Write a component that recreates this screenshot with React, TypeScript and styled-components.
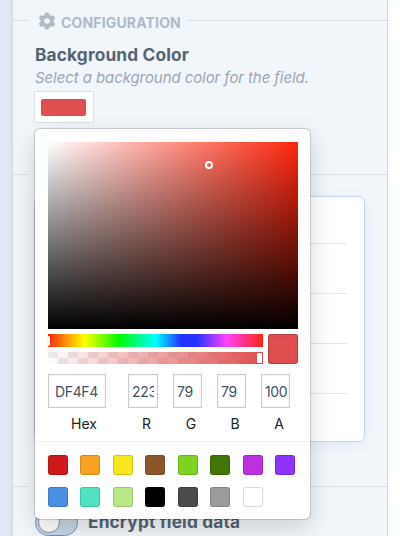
import React from 'react';
import styled, { createGlobalStyle } from 'styled-components';

const GlobalStyle = createGlobalStyle`
  * { box-sizing: border-box; }
  body { margin: 0; background: #fff; font-family: Inter, sans-serif; overflow: hidden; }
`;

const Page = styled.div`
  display: flex;
  width: 400px;
  height: 536px;
  overflow: hidden;
  background: #fff;
`;

const Gutter = styled.div`
  flex: 0 0 12px;
  background: linear-gradient(90deg, #e2eaf6 0, #e1eaf5 60%, #d9e3ee 100%);
`;

const Panel = styled.main`
  position: relative;
  flex: 0 0 376px;
  display: flex;
  flex-direction: column;
  background: #f1f6fb;
  border: solid #d3dce7;
  border-width: 0 1px;

  > * { flex-shrink: 0; }
`;

const SectionHeader = styled.header`
  display: flex;
  align-items: center;
  height: 41px;
  color: #b0b9c6;
`;

const Rule = styled.div<{ $width?: number }>`
  height: 1px;
  flex: ${p => (p.$width ? `0 0 ${p.$width}px` : '1')};
  background: #d9e1e8;
`;

const HeaderLabel = styled.h2`
  display: flex;
  align-items: center;
  gap: 5px;
  width: 158px;
  height: 24px;
  margin: 3px 0 0;
  padding-left: 9px;
  font-size: 14px;
  font-weight: 700;
  letter-spacing: 0.16px;
  white-space: nowrap;
`;

const GearIcon = styled.svg`
  flex: none;
  margin-top: -2px;
`;

const Field = styled.section`
  display: flex;
  flex-direction: column;
  align-items: flex-start;
  height: 133px;
  padding: 3px 0 0 22px;
`;

const FieldTitle = styled.h3`
  margin: 0;
  font-size: 17.3px;
  line-height: 22px;
  font-weight: 700;
  letter-spacing: 0.15px;
  color: #566472;
  white-space: nowrap;
`;

const Hint = styled.p`
  margin: 2px 0 0;
  font-size: 15px;
  line-height: 20px;
  font-style: italic;
  font-feature-settings: 'cv11';
  letter-spacing: -0.08px;
  color: #9aa5b3;
  white-space: nowrap;
`;

const ColorButton = styled.button`
  width: 60px;
  height: 32px;
  margin: 3px 0 0 -1px;
  padding: 7px 7px 6px 6px;
  border: 1px solid #dbe0e5;
  border-radius: 2px;
  background: #fff;
`;

const ColorChip = styled.span`
  display: block;
  width: 45px;
  height: 17px;
  border-radius: 2px;
  background: #df4f4f;
`;

const OptionsCard = styled.div`
  width: 331px;
  height: 246px;
  margin: 21px 0 44px 21px;
  padding: 0 17px;
  border: 1px solid #c8d5e6;
  border-radius: 7px;
  background: #fff;
  box-shadow: 0 3px 12px rgba(90, 130, 200, 0.1);
`;

const OptionRow = styled.div<{ $tall?: boolean }>`
  height: ${p => (p.$tall ? 47 : 50)}px;
  border-bottom: 1px solid #e4e6e9;
`;

const SplitRule = styled.div`
  display: flex;
  justify-content: space-between;
`;

const ToggleRow = styled.div`
  display: flex;
  align-items: center;
  gap: 10px;
  height: 70px;
  padding-left: 22px;
`;

const Toggle = styled.span`
  display: flex;
  align-items: center;
  width: 43px;
  height: 27px;
  padding: 2px;
  border: 1px solid #7690b0;
  border-radius: 14px;
  background: #c9d5e3;
`;

const Knob = styled.span`
  width: 22px;
  height: 22px;
  border: 1px solid #7d94b0;
  border-radius: 50%;
  background: #fff;
`;

const Picker = styled.div`
  position: absolute;
  left: 22px;
  top: 129px;
  width: 275px;
  height: 390px;
  padding-top: 13px;
  border-radius: 5px;
  background: #fff;
  box-shadow: 0 0 0 1px rgba(0, 0, 0, 0.15), 0 8px 24px rgba(0, 0, 0, 0.16);
`;

const Saturation = styled.div`
  display: flex;
  width: 250px;
  height: 187px;
  margin: 0 0 5px 13px;
  padding: 19px 0 0 157px;
  background: linear-gradient(to top, #000, transparent),
    linear-gradient(to right, #fff, rgba(255, 255, 255, 0)), #ff260d;
`;

const Pointer = styled.span`
  width: 8px;
  height: 8px;
  border: 2px solid #fff;
  border-radius: 50%;
`;

const Controls = styled.div`
  display: flex;
  gap: 5px;
  margin-left: 13px;
`;

const Sliders = styled.div`
  display: flex;
  flex-direction: column;
  gap: 5px;
  width: 215px;
`;

const Hue = styled.div`
  display: flex;
  align-items: center;
  height: 13px;
  background: linear-gradient(90deg, #ff260d 0, #ffff00 17%, #00f900 33%, #00fdff 50%, #2432ff 62%, #2432ff 69%, #ff40ff 83%, #ff260d 100%);
`;

const Alpha = styled.div`
  display: flex;
  align-items: center;
  justify-content: flex-end;
  height: 12px;
  background: linear-gradient(90deg, rgba(223, 79, 79, 0), #df4f4f),
    conic-gradient(#fff 0 25%, #ebebeb 0 50%, #fff 0 75%, #ebebeb 0) 0 -4px / 20px 20px;
`;

const Handle = styled.span<{ $half?: boolean }>`
  width: ${p => (p.$half ? 2 : 5)}px;
  height: 10px;
  margin-right: ${p => (p.$half ? 0 : 1)}px;
  border-radius: 1px;
  background: #fff;
  box-shadow: 0 0 1px rgba(0, 0, 0, 0.4);
`;

const Current = styled.div`
  width: 30px;
  height: 30px;
  border-radius: 3px;
  background: #df4f4f;
  box-shadow: inset 0 0 0 1px rgba(0, 0, 0, 0.15), inset 0 0 4px rgba(0, 0, 0, 0.1);
`;

const Fields = styled.div`
  display: grid;
  grid-template-columns: 58px 30px 29px 29px 29px;
  column-gap: 15px;
  margin: 10px 0 0 13px;
`;

const Channel = styled.label<{ $shift: number }>`
  display: flex;
  flex-direction: column;
  align-items: center;
  margin-left: ${p => p.$shift}px;
  margin-right: ${p => -p.$shift}px;
  font-size: 14px;
  color: #222;
`;

const ChannelInput = styled.input<{ $wide?: boolean; $flush?: boolean }>`
  width: 100%;
  height: 34px;
  padding: 0 ${p => (p.$flush ? 0 : 3)}px 0 ${p => (p.$wide ? 6 : 3)}px;
  border: 1px solid #ccc;
  border-radius: 0;
  outline: 0;
  font: 14px Inter, sans-serif;
  letter-spacing: -0.35px;
  color: #46535f;
  background: #fff;
  box-shadow: inset 0 0 2px rgba(0, 0, 0, 0.12);
`;

const ChannelName = styled.span<{ $wide?: boolean }>`
  margin-top: 7px;
  line-height: 18px;
  margin-left: ${p => (p.$wide ? 14 : 7)}px;
`;

const Presets = styled.div`
  display: grid;
  grid-template-columns: repeat(8, 20px);
  column-gap: 12.43px;
  row-gap: 12px;
  margin-top: 8px;
  padding: 13px 13px 0;
  border-top: 1px solid #eee;
`;

const Preset = styled.span<{ $color: string }>`
  height: 20px;
  border-radius: 3px;
  background: ${p => p.$color};
  box-shadow: inset 0 0 0 1px rgba(0, 0, 0, 0.15);
`;

const presets = [
  '#D0191B', '#F6A323', '#F8E71C', '#8B572A', '#7ED321', '#417505', '#BD30DD', '#9032FE',
  '#4A90E2', '#50E3C2', '#B8E986', '#000000', '#4A4A4A', '#9B9B9B', '#FFFFFF',
];

const channels = [
  { name: 'Hex', value: 'DF4F4', shift: 0 },
  { name: 'R', value: '223', shift: 7 },
  { name: 'G', value: '79', shift: 7 },
  { name: 'B', value: '79', shift: 7 },
  { name: 'A', value: '100', shift: 7 },
];

const teeth = [0, 60, 120, 180, 240, 300];

const Gear = () => (
  <GearIcon width="18" height="18" viewBox="-9 -9 18 18" fill="none" stroke="currentColor">
    <circle r="4.7" strokeWidth="3.8" />
    {teeth.map(angle => (
      <path
        key={angle}
        d="M-1.3 -8 L1.3 -8 L1.9 -6 L-1.9 -6 Z"
        fill="currentColor"
        strokeWidth="1"
        strokeLinejoin="round"
        transform={`rotate(${angle})`}
      />
    ))}
  </GearIcon>
);

export default function App() {
  return (
    <Page>
      <GlobalStyle />
      <Gutter />
      <Panel>
        <SectionHeader>
          <Rule $width={16} />
          <HeaderLabel><Gear />CONFIGURATION</HeaderLabel>
          <Rule />
        </SectionHeader>
        <Field>
          <FieldTitle>Background Color</FieldTitle>
          <Hint>Select a background color for the field.</Hint>
          <ColorButton><ColorChip /></ColorButton>
        </Field>
        <SplitRule><Rule $width={16} /><Rule $width={200} /></SplitRule>
        <OptionsCard>
          <OptionRow $tall /><OptionRow /><OptionRow /><OptionRow />
        </OptionsCard>
        <SplitRule><Rule $width={16} /><Rule $width={200} /></SplitRule>
        <ToggleRow>
          <Toggle><Knob /></Toggle>
          <FieldTitle>Encrypt field data</FieldTitle>
        </ToggleRow>
        <Picker>
          <Saturation><Pointer /></Saturation>
          <Controls>
            <Sliders>
              <Hue><Handle $half /></Hue>
              <Alpha><Handle /></Alpha>
            </Sliders>
            <Current />
          </Controls>
          <Fields>
            {channels.map((c, i) => (
              <Channel key={c.name} $shift={c.shift}>
                <ChannelInput $wide={i === 0} $flush={c.name === 'A'} defaultValue={c.value} />
                <ChannelName $wide={i === 0}>{c.name}</ChannelName>
              </Channel>
            ))}
          </Fields>
          <Presets>
            {presets.map(color => <Preset key={color} $color={color} />)}
          </Presets>
        </Picker>
      </Panel>
    </Page>
  );
}
